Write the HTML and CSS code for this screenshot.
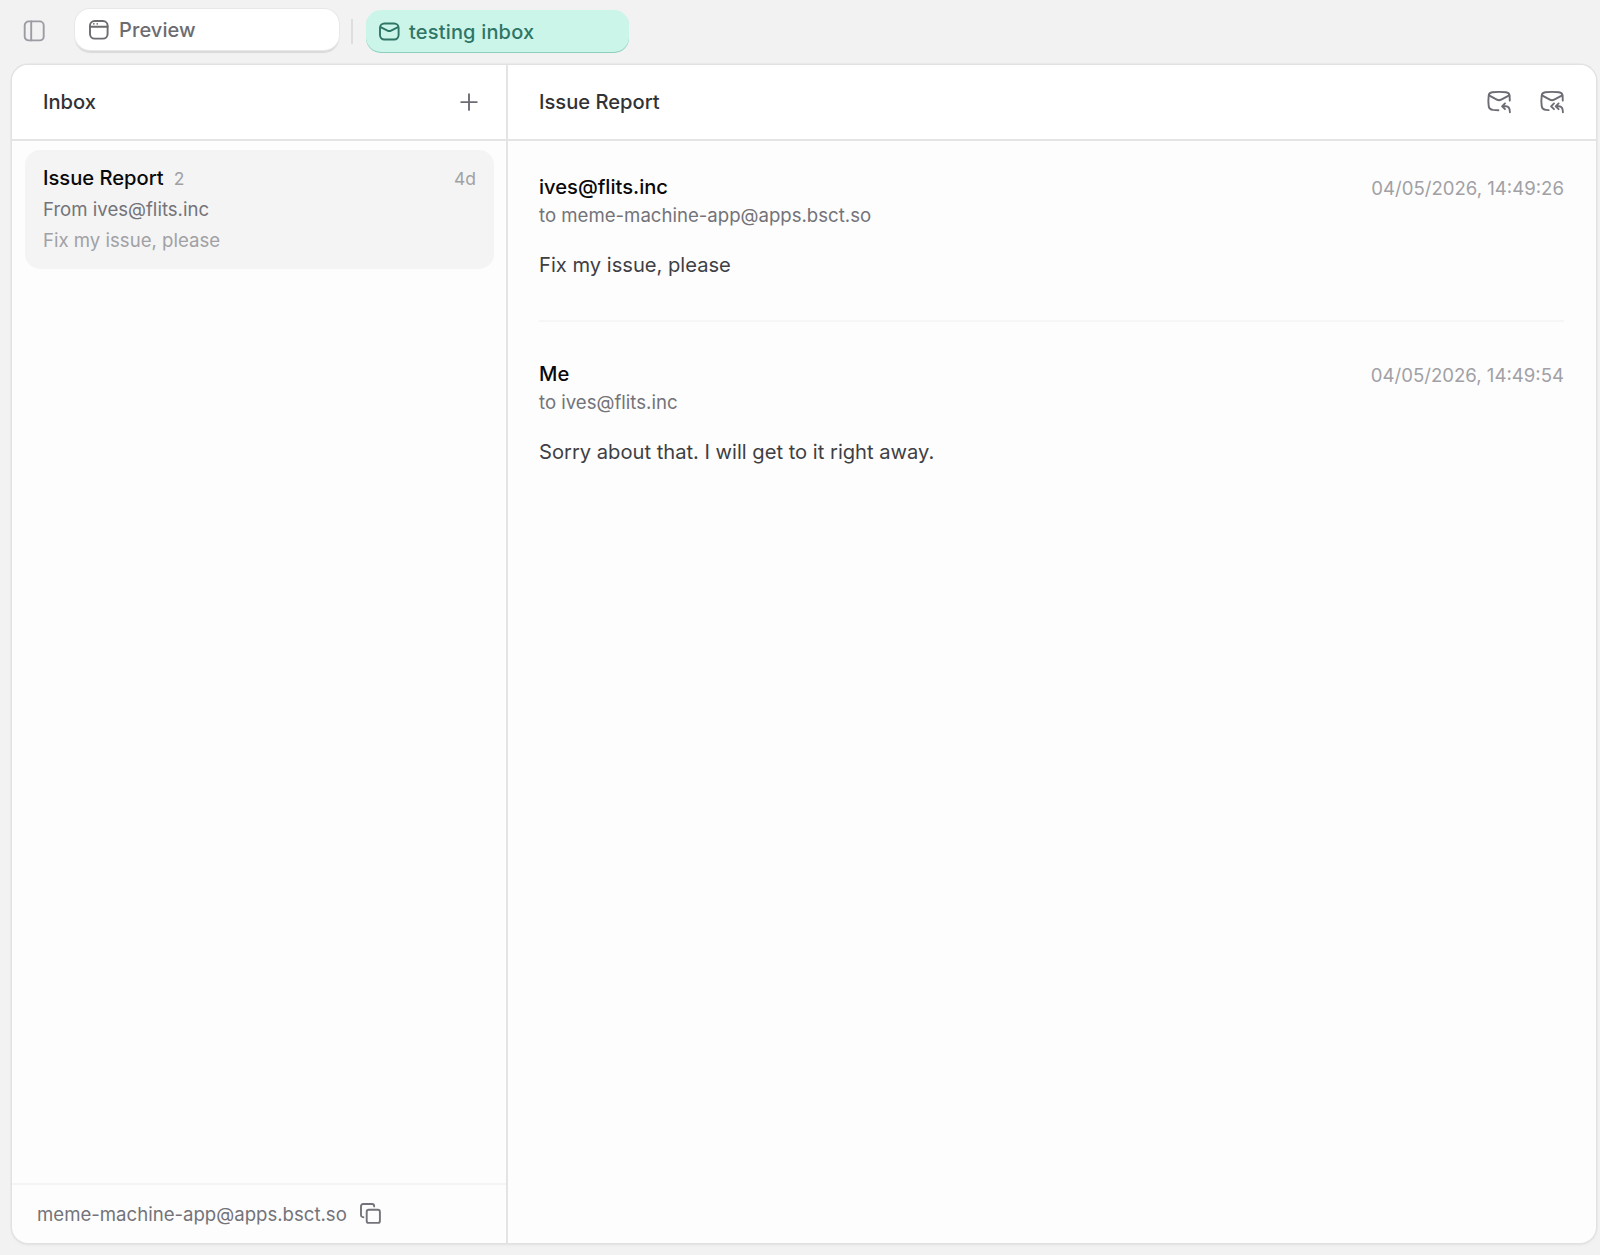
FILE: index.html
```html
<!DOCTYPE html>
<html lang="en">
<head>
  <meta charset="UTF-8">
  <title>Inbox</title>
  <link rel="stylesheet" href="styles.css">
</head>
<body>
  <!-- Tab bar -->
  <nav class="tabs">
    <button class="sidebar-toggle" type="button" aria-label="Toggle sidebar">
      <svg width="22" height="22" viewBox="0 0 22 22"><rect x="1.700" y="1.400" width="19" height="19" rx="4"/><path d="M8.200 1.400v19"/></svg>
    </button>
    <div class="tab">
      <svg width="20" height="20" viewBox="0 0 20 20"><rect x="1" y="1" width="17.6" height="17.6" rx="4.6"/><path d="M1 6.800h17.600"/><path class="dots" d="M4.800 3.900h.1M8.200 3.900h.1"/></svg>
      <span>Preview</span>
    </div>
    <div class="tab-divider"></div>
    <div class="tab active">
      <svg width="21" height="20" viewBox="0 0 21 20"><rect x="1" y="1.5" width="18.6" height="16" rx="4.4"/><path d="M1.6 5.100l6.9 3.5q1.8.9 3.6 0L19 5.100"/></svg>
      <span>testing inbox</span>
    </div>
  </nav>

  <main class="panel">
    <!-- Conversation list -->
    <section class="list">
      <header class="bar">
        <h2>Inbox</h2>
        <button type="button" aria-label="New message">
          <svg width="18" height="18" viewBox="0 0 18 18"><path d="M9 1.300v15.600M1.200 9.100h15.600"/></svg>
        </button>
      </header>
      <div class="threads">
        <div class="thread">
          <div class="thread-top">
            <h3>Issue Report</h3>
            <span class="count">2</span>
            <span class="age">4d</span>
          </div>
          <p class="from">From ives@flits.inc</p>
          <p class="snippet">Fix my issue, please</p>
        </div>
      </div>
      <footer class="address">
        <span>meme-machine-app@apps.bsct.so</span>
        <svg width="21" height="21" viewBox="0 0 21 21"><rect x="6.7" y="6.7" width="13.2" height="13.2" rx="2"/><path d="M3.4 14.2c-1.4 0-2.4-.8-2.4-2.2V3.2C1 1.900 1.900 1 3.200 1H12c1.400 0 2.200 1 2.200 2.400"/></svg>
      </footer>
    </section>

    <!-- Open conversation -->
    <section class="conversation">
      <header class="bar">
        <h2>Issue Report</h2>
        <div class="actions">
          <button type="button" aria-label="Reply">
            <svg width="24" height="24" viewBox="0 0 24 24"><path d="M11.400 20.200L6 19.900Q2.200 19.600 1.700 16Q1 10.800 1.700 5.600Q2 2.500 5.200 2.200Q12 1.500 19 2.200Q22.200 2.500 22.600 5.600L22.800 10.600"/><path d="M2 5.400l7.800 4.300q2.200 1.200 4.400 0L22.200 5.400"/><path d="M18 13.400l-2.900 2.900 2.900 2.900M15.300 16.300h3.500Q22.900 16.300 22.900 22.300"/></svg>
          </button>
          <button type="button" aria-label="Reply all">
            <svg width="24" height="24" viewBox="0 0 24 24"><path d="M8.600 20.100L6 19.900Q2.200 19.600 1.700 16Q1 10.800 1.700 5.600Q2 2.500 5.200 2.200Q12 1.500 19 2.200Q22.200 2.500 22.600 5.600L22.800 10.600"/><path d="M2 5.400l7.800 4.300q2.200 1.200 4.400 0L22.200 5.400"/><path d="M14 13.400l-2.900 2.900 2.900 2.900M18.600 13.400l-2.900 2.900 2.900 2.900M15.900 16.300h3Q22.900 16.300 22.900 22.300"/></svg>
          </button>
        </div>
      </header>
      <div class="messages">
        <article class="message">
          <div class="message-top">
            <h3>ives@flits.inc</h3>
            <time>04/05/2026, 14:49:26</time>
          </div>
          <p class="to">to meme-machine-app@apps.bsct.so</p>
          <p class="body">Fix my issue, please</p>
        </article>
        <article class="message">
          <div class="message-top">
            <h3>Me</h3>
            <time>04/05/2026, 14:49:54</time>
          </div>
          <p class="to">to ives@flits.inc</p>
          <p class="body">Sorry about that. I will get to it right away.</p>
        </article>
      </div>
    </section>
  </main>
</body>
</html>
```
FILE: styles.css
```css
:root {
  --color-bg: #f2f2f2;
  --color-panel: #fdfdfd;
  --color-border: #e4e4e5;
  --color-title: #323236;
  --color-strong: #09090b;
  --color-muted: #737379;
  --color-faint: #a1a1a5;
  --color-active: #ccf5ea;
  --color-active-text: #2f7566;
}
* { box-sizing: border-box; margin: 0; padding: 0; }
body {
  height: 1255px;
  display: flex;
  flex-direction: column;
  background: var(--color-bg);
  font-family: Inter, "Liberation Sans", sans-serif;
  font-size: 18.6px;
  overflow: hidden;
}
button { border: none; background: none; display: flex; color: inherit; }
svg {
  display: block; flex: none; fill: none; stroke: currentColor;
  stroke-width: 1.9; stroke-linecap: round; stroke-linejoin: round;
}
.dots { stroke-width: 1.6; }
h2, h3 { font-size: 20.15px; font-weight: 500; }

/* Tab bar */
.tabs { height: 65px; flex: none; display: flex; align-items: flex-start; padding: 9px 0 0 23px; }
.sidebar-toggle { margin: 11px 30px 0 0; color: #9c9ca4; }
.tab {
  width: 264px; height: 41px; padding: 0 14px;
  display: flex; align-items: center; gap: 10px;
  border-radius: 15px; background: #fff; color: #6c6c70;
  font-size: 20px; font-weight: 500; letter-spacing: .1px;
  box-shadow: 0 0 0 1px #e8e8e8, 0 3px 1px #dadada;
}
.tab.active {
  width: 263px; height: 43px; margin-top: 1px; padding: 0 13px; gap: 9px;
  background: var(--color-active); color: var(--color-active-text);
  letter-spacing: .18px;
  box-shadow: inset 0 -1px 0 #8fcdbd;
}
.tab-divider { width: 2px; height: 25px; margin: 10px 13px 0 12px; background: #dedede; }

/* Panel */
.panel {
  flex: 1; display: flex; margin: 0 4px 12px 12px;
  background: var(--color-panel); border-radius: 16px;
  box-shadow: 0 0 0 1.5px #e2e2e2, 0 2px 3px #e4e4e4;
  overflow: hidden;
}
.bar {
  height: 76px; flex: none;
  display: flex; align-items: center; justify-content: space-between;
  padding: 0 32px 0 31px; background: #fff;
  border-bottom: 2px solid var(--color-border); color: var(--color-title);
}
.bar h2 { padding-bottom: 2px; }
.bar button { color: #6c6c74; }

.list { width: 496px; display: flex; flex-direction: column; border-right: 2px solid var(--color-border); }
.list .bar { padding-right: 28px; }
.threads { flex: 1; padding: 9px 12px 0 13px; }
.thread { height: 119px; padding: 12px 18px 0 18px; border-radius: 15px; background: #f4f4f4; }
.thread p { line-height: 31px; }
.thread-top { display: flex; align-items: center; height: 32px; padding-bottom: 1px; }
.thread h3 { color: var(--color-strong); }
.count, .age { padding-top: 2px; font-size: 17.5px; color: var(--color-faint); }
.count { margin-left: 10px; }
.age { margin-left: auto; }
.from { color: var(--color-muted); }
.snippet { color: var(--color-faint); }
.address {
  height: 60px; padding: 0 0 1px 25px;
  display: flex; align-items: center; gap: 13px;
  border-top: 2px solid #f5f5f5; color: var(--color-muted);
}

.conversation { flex: 1; display: flex; flex-direction: column; }
.actions { display: flex; gap: 29px; }
.messages { padding: 0 32px 0 31px; }
.message { height: 187px; padding-top: 32px; }
.message:first-child { height: 181px; border-bottom: 2px solid #f6f6f6; }
.message + .message { padding-top: 38px; }
.message-top { height: 29px; display: flex; align-items: center; justify-content: space-between; }
.message h3 { padding-bottom: 2px; color: var(--color-strong); }
.message time { color: var(--color-faint); }
.to { line-height: 27px; color: var(--color-muted); }
.body { margin-top: 20px; font-size: 20.15px; line-height: 32px; color: #3f3f44; }
```
